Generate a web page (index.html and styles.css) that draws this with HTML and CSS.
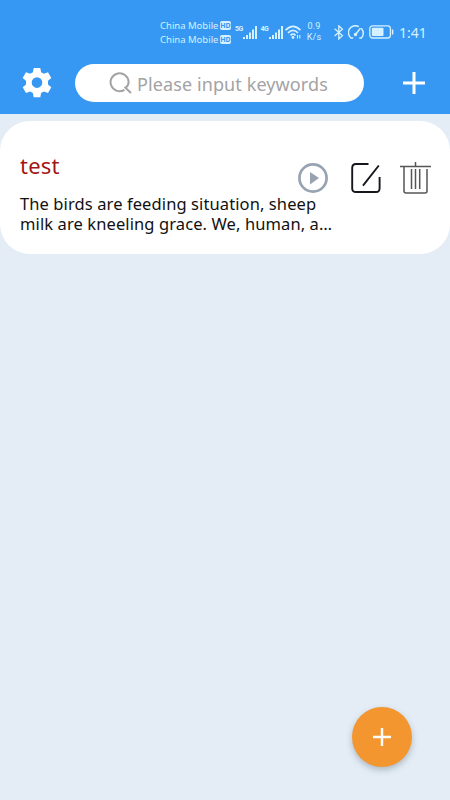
FILE: index.html
```
<!DOCTYPE html>
<html lang="en">
<head>
    <meta charset="UTF-8">
    <meta name="viewport" content="width=device-width, initial-scale=1.0">
    <title>Notes</title>
    <link rel="stylesheet" href="styles.css">
</head>
<body>
    <header class="header">
        <div class="status-bar">
            <div class="carriers">
                <div class="carrier"><span class="carrier-name">China Mobile</span><span class="hd">HD</span></div>
                <div class="carrier"><span class="carrier-name">China Mobile</span><span class="hd">HD</span></div>
            </div>
            <div class="signal">
                <span class="signal-type">5G</span>
                <svg width="15" height="14" viewBox="0 0 15 14" fill="currentColor"><path d="M0 11h2v2H0zM3 9h2v4H3zM6 6.500h2V13H6zM9 3.500h2V13H9zM12 0h2v13h-2z"/></svg>
            </div>
            <div class="signal">
                <span class="signal-type">4G</span>
                <svg width="15" height="14" viewBox="0 0 15 14" fill="currentColor"><path d="M0 11h2v2H0zM3 9h2v4H3zM6 6.500h2V13H6zM9 3.500h2V13H9zM12 0h2v13h-2z"/></svg>
            </div>
            <svg class="wifi" width="17" height="15" viewBox="0 0 17 15" fill="none" stroke="currentColor" stroke-width="1.700">
                <path d="M.6 5.200Q8 -2.600 15.400 5.200M3 7.900Q8 3 13 7.900M5.400 10.400Q8 8 10.600 10.400"/>
                <circle cx="8" cy="12.500" r="1.400" fill="currentColor" stroke="none"/>
                <path d="M12.500 10v3.500M14.800 10v3.500" stroke-width="1.100"/>
            </svg>
            <div class="net-speed"><span>0.9</span><span>K/s</span></div>
            <svg class="bluetooth" width="10" height="15" viewBox="0 0 10 15" fill="none" stroke="currentColor" stroke-width="1.300">
                <path d="M.6 3.800L8.400 10.600L4.800 14V.8L8.400 4.200L.6 11"/>
            </svg>
            <svg class="gauge" width="17" height="15" viewBox="0 0 17 15" fill="none" stroke="currentColor" stroke-width="1.500" stroke-linecap="round">
                <path d="M4.600 13H3A6.900 6.900 0 0 1 10.300 1.400M13.600 3.800A6.900 6.900 0 0 1 13.400 13H11.800M7.500 9.500L12 3.700"/>
                <circle cx="7.500" cy="9.500" r="1" fill="currentColor"/>
            </svg>
            <svg class="battery" width="26" height="14" viewBox="0 0 26 14">
                <rect x=".8" y=".8" width="20.600" height="12.200" rx="2.800" fill="none" stroke="currentColor" stroke-width="1.300"/>
                <rect x="2.800" y="2.800" width="11.700" height="8.200" rx="1" fill="currentColor"/>
                <path d="M23.600 4.500v5" stroke="currentColor" stroke-width="1.500"/>
            </svg>
            <span class="clock">1:41</span>
        </div>

        <div class="toolbar">
            <svg class="settings" width="30" height="30" viewBox="0 0 30 30">
                <path d="M11.700 0h6.600l.8 4.200 2.800 1.600 4.100-1.500 3.300 5.700-3.300 2.800v3.600l3.300 2.800-3.300 5.700-4.100-1.500-2.800 1.600-.8 4.300h-6.600l-.8-4.300-2.800-1.600L4 24.900.7 19.200 4 16.400v-3.600L.7 10 4 4.300l4.100 1.500 2.800-1.600zM15 9.300a5.300 5.300 0 1 0 0 10.600 5.300 5.300 0 0 0 0-10.600z" fill="#fff" fill-rule="evenodd"/>
            </svg>
            <div class="search">
                <svg width="24" height="24" viewBox="0 0 24 24" fill="none" stroke="#a3a3a3" stroke-width="2">
                    <path d="M15.500 18.800A9 9 0 1 1 19.600 11Q19.500 15 16.400 16.700L22 22"/>
                </svg>
                <span class="placeholder">Please input keywords</span>
            </div>
            <svg class="add" width="22" height="22" viewBox="0 0 22 22" stroke="#fff" stroke-width="3"><path d="M11 0v22M0 11h22"/></svg>
        </div>
    </header>

    <main class="list">
        <article class="card">
            <div class="card-text">
                <h2 class="card-title">test</h2>
                <p class="card-body"><span class="line line-first">The birds are feeding situation, sheep</span><span class="line line-second">milk are kneeling grace. We, human, a…</span></p>
            </div>
            <div class="card-actions">
                <svg class="play" width="30" height="30" viewBox="0 0 30 30">
                    <circle cx="15" cy="15" r="13.600" fill="none" stroke="#98a3b1" stroke-width="2.700"/>
                    <path d="M12 9l9 6-9 6.500z" fill="#98a3b1"/>
                </svg>
                <svg class="edit" width="30" height="32" viewBox="0 0 30 32" fill="none" stroke="#16161c" stroke-width="1.900">
                    <path d="M17.500 2H5Q1.200 2 1.200 6v20.500Q1.200 30 5 30h20q3.600 0 3.600-3.800V15M12 23.700L27.800 3.500"/>
                </svg>
                <svg class="trash" width="31" height="33" viewBox="0 0 31 33" fill="none" stroke="#555" stroke-width="1.500">
                    <path d="M0 5.500h31M15.500 1v4M4 5.500v24.500q0 2 2 2h19q2 0 2-2V8M11.500 8v20M15.500 8v20M19.700 8v20"/>
                </svg>
            </div>
        </article>
    </main>

    <div class="fab">
        <svg width="18" height="18" viewBox="0 0 18 18" stroke="#fff" stroke-width="2.400"><path d="M9 0v18M0 9h18"/></svg>
    </div>
</body>
</html>
```
FILE: styles.css
```
* {
    box-sizing: border-box;
}

body {
    margin: 0;
    height: 800px;
    overflow: hidden;
    background: #e4edf5;
    font-family: "Noto Sans", "Open Sans", sans-serif;
}

svg {
    display: block;
    flex: none;
}

.header {
    height: 114px;
    background: #3798f4;
    color: #d5f1ff;
}

.status-bar {
    display: flex;
    align-items: center;
    height: 64px;
    padding-left: 160px;
}

.carriers {
    width: 74px;
    padding-top: 1px;
}

.carrier {
    display: flex;
    align-items: center;
    height: 14px;
}

.carrier-name {
    width: 60px;
    font-size: 9.5px;
    line-height: 14px;
    white-space: nowrap;
}

.hd {
    width: 11px;
    height: 9px;
    border-radius: 2px;
    background: #d5f1ff;
    color: #3798f4;
    font-size: 7px;
    font-weight: 700;
    line-height: 9px;
    text-align: center;
}

.signal {
    display: flex;
    align-items: flex-start;
    width: 25.5px;
    padding-top: 1px;
}

.signal-type {
    width: 9px;
    padding-left: 1px;
    font-family: Roboto, sans-serif;
    font-size: 7px;
    font-weight: 700;
    letter-spacing: -0.4px;
    line-height: 6px;
}

.net-speed {
    display: flex;
    flex-direction: column;
    align-items: center;
    width: 20px;
    margin-left: 2px;
    font-family: Roboto, sans-serif;
    font-size: 9px;
    letter-spacing: 0.2px;
    line-height: 11px;
}

.bluetooth {
    margin-left: 10px;
}

.gauge {
    margin-left: 4px;
}

.battery {
    margin-left: 4px;
}

.clock {
    margin-left: 4px;
    padding-top: 1px;
    font-size: 14px;
    line-height: 20px;
}

.toolbar {
    display: flex;
    align-items: center;
    height: 38px;
    padding-left: 22px;
}

.search {
    display: flex;
    align-items: center;
    width: 289px;
    height: 38px;
    margin-left: 23px;
    padding-left: 34px;
    border-radius: 19px;
    background: #fff;
}

.placeholder {
    margin-left: 4px;
    padding-top: 2px;
    color: #a3a3a3;
    font-size: 18px;
    letter-spacing: 0.1px;
    white-space: nowrap;
}

.add {
    margin-left: 39px;
}

.list {
    padding-top: 7px;
}

.card {
    display: flex;
    height: 133px;
    padding-left: 20px;
    border-radius: 30px;
    background: #fff;
}

.card-text {
    width: 278px;
    padding-top: 29px;
}

.card-title {
    margin: 0;
    color: #a31515;
    font-size: 22px;
    font-weight: 400;
    letter-spacing: 0.2px;
    line-height: 30px;
}

.card-body {
    margin: 14px 0 0;
    color: #111;
    font-size: 16.5px;
    letter-spacing: 0.1px;
    line-height: 20px;
}

.line {
    display: block;
    white-space: nowrap;
}

.card-actions {
    display: flex;
    align-items: center;
    height: 33px;
    margin-top: 40px;
}

.edit {
    margin-left: 23px;
}

.trash {
    margin-left: 19px;
}

.fab {
    position: absolute;
    left: 352px;
    top: 707px;
    display: flex;
    align-items: center;
    justify-content: center;
    width: 60px;
    height: 60px;
    border-radius: 50%;
    background: #f3962f;
    box-shadow: 0 3px 6px rgba(70, 90, 110, 0.35);
}
```
